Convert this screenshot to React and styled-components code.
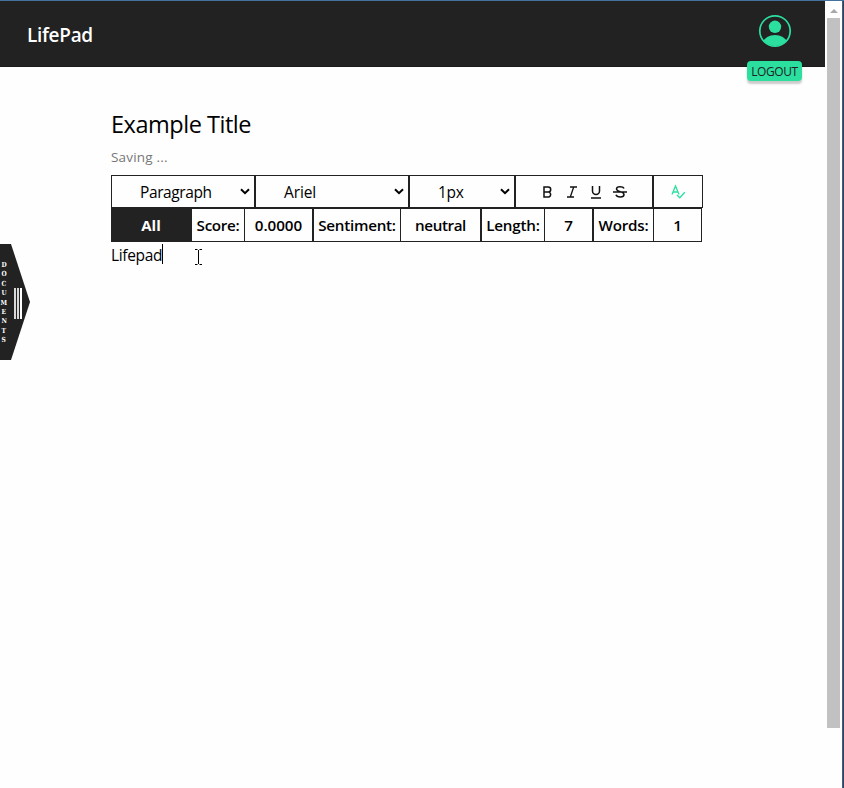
import React from "react";
import styled, { createGlobalStyle } from "styled-components";

const Global = createGlobalStyle`
  * { box-sizing: border-box; }
  body { margin: 0; background: #fefefe; color: #000; font-family: "Open Sans", "Noto Sans", sans-serif; overflow: hidden; }
`;
const Window = styled.div`
  display: grid; grid-template-columns: 825px 17px 2px; width: 844px; height: 788px;
  position: relative;
`;
const TopEdge = styled.div`
  position: absolute; top: 0; left: 0; right: 0; height: 1px; background: #41719c;
`;
const RightEdge = styled.div`background: #2b6595; border-right: 1px solid #4a3a40;`;
const Page = styled.div`position: relative;`;
const Header = styled.header`
  height: 67px; background: #222; border-bottom: 1px solid #1c1a1b;
  display: flex; justify-content: space-between; padding: 0 23px 0 27px;
`;
const Text = styled.span`
  font-size: ${(p) => p.$size || 15.5}px;
  font-weight: ${(p) => p.$weight || 400};
  letter-spacing: ${(p) => p.$track || 0}px;
  color: ${(p) => p.$color || "#000"};
  line-height: ${(p) => p.$line || 20}px;
  white-space: nowrap;
`;
const Brand = styled.div`padding-top: 24px; line-height: 0;`;
const Account = styled.div`
  display: flex; flex-direction: column; align-items: center; padding-top: 14px; width: 55px; height: 83px; z-index: 1;
  svg { display: block; flex: none; }
`;
const Logout = styled.button`
  border: 0; margin-top: 13px; padding: 1px 0 0; height: 20px; width: 55px; flex: none; border-radius: 4px;
  background: #2bdf9f; box-shadow: 0 3px 2px rgba(0,0,0,.2); display: flex; align-items: center; justify-content: center;
  font-family: inherit;
`;
const Editor = styled.main`padding: 44px 0 0 111px; display: flex; flex-direction: column; align-items: flex-start;`;
const Title = styled.h1`margin: 0; height: 26px; line-height: 0;`;
const Status = styled.div`margin-top: 10px; height: 28px; line-height: 0;`;
const Bar = styled.div`display: flex; height: ${(p) => p.$h}px;`;
const Cell = styled.div`
  width: ${(p) => p.$w}px; border: 1px solid #222; display: flex; align-items: center;
  padding: 0 3px 0 28px; justify-content: space-between;
`;
const Tools = styled(Cell)`padding: 0 24px;`;
const Check = styled(Cell)`padding: 0; justify-content: center;`;
const All = styled.div`width: 80px; background: #222; display: flex; align-items: center; justify-content: center;`;
const Stat = styled.div`
  display: grid; grid-template-columns: ${(p) => p.$a}px ${(p) => p.$b}px;
  border: 1px solid #222;
`;
const StatPart = styled.div`
  display: flex; align-items: center; justify-content: center;
  & + & { border-left: 1px solid #222; }
`;
const Content = styled.div`display: flex; height: 25px; align-items: center;`;
const Caret = styled.i`width: 1px; height: 20px; margin-bottom: 2px; background: #000;`;
const Pointer = styled.svg`position: absolute; left: 194px; top: 249px;`;
const Drawer = styled.div`
  position: absolute; left: 0; top: 244px; width: 30px; height: 116px; background: #222;
  clip-path: polygon(0 0, 11px 0, 100% 50%, 11px 100%, 0 100%);
`;
const Letters = styled.div`
  position: absolute; left: 0; top: 16px; width: 8px; display: flex; flex-direction: column; align-items: center;
  font: 700 7px/9.4px "DejaVu Serif", serif; color: #fff;
  span { transform: scaleX(.85); }
`;
const Grip = styled.div`
  position: absolute; left: 14px; top: 44px; display: flex; gap: 1px;
  i { width: 2px; height: 31px; background: #d8d8d8; }
  i:last-child { background: #fff; }
`;
const Scroll = styled.div`padding: 9px 2px 0; display: flex; flex-direction: column; align-items: center;`;
const Up = styled.div`border: 4px solid transparent; border-top: 0; border-bottom: 4px solid #a8a8a8;`;
const Thumb = styled.div`margin-top: 5px; width: 13px; height: 710px; background: #c1c1c1;`;

const Chevron = () => (
  <svg width="12" height="12" viewBox="0 0 12 12" fill="none" stroke="#000" strokeWidth="2"><path d="M2 3.2 6 7.2 10 3.2" /></svg>
);
const Icon = ({ children }) => (
  <svg width="16" height="16" viewBox="0 0 16 16" fill="none" stroke="#111" strokeWidth="1.5">{children}</svg>
);
const selects = [["Paragraph", 144, -0.4], ["Ariel", 154, -0.1], ["1px", 106, -0.3]];
const stats = [
  ["Score:", "0.0000", 52, 68, -0.3, -0.05],
  ["Sentiment:", "neutral", 86, 80, -0.25, -0.4],
  ["Length:", "7", 62, 48, -0.2, 0],
  ["Words:", "1", 59, 48, -0.2, 0],
];

export default function App() {
  return (
    <>
      <Global />
      <Window>
        <Page>
          <Header>
            <Brand><Text $size={19} $weight={600} $color="#fff" $track={-0.3} $line={22}>LifePad</Text></Brand>
            <Account>
              <svg width="34" height="34" viewBox="0 0 34 34">
                <clipPath id="face"><circle cx="17" cy="17" r="15" /></clipPath>
                <circle cx="17" cy="17" r="15.2" fill="none" stroke="#2bdf9f" strokeWidth="1.7" />
                <circle cx="17" cy="12.8" r="6.2" fill="#2bdf9f" />
                <path clipPath="url(#face)" d="M4 29Q8 21 17 21T30 29L26 34H8Z" fill="#2bdf9f" />
              </svg>
              <Logout><Text $size={12} $color="#222" $track={-0.4}>LOGOUT</Text></Logout>
            </Account>
          </Header>
          <Editor>
            <Title><Text $size={23.5} $line={26} $track={-0.47}>Example Title</Text></Title>
            <Status><Text $size={13.5} $color="#777" $track={0.2}>Saving ...</Text></Status>
            <Bar $h={33}>
              {selects.map(([label, w, t]) => (
                <Cell key={label} $w={w}><Text $track={t}>{label}</Text><Chevron /></Cell>
              ))}
              <Tools $w={138}>
                <Icon><path d="M4 8h5a2.7 2.7 0 0 1 0 5H4V3h4.2a2.4 2.4 0 0 1 0 5" /></Icon>
                <Icon><path strokeWidth="1.3" d="M6 3h7M3 13h7M9.7 3 6.3 13" /></Icon>
                <Icon><path d="M4.5 2v5a3.5 3.5 0 0 0 7 0V2M3 14h10" /></Icon>
                <Icon><path d="M12 4.5C11 2.4 4.5 2 4.5 5c0 3 7.5 2.3 7.5 5.5 0 3.3-7 3.3-8 .3M1 8h14" /></Icon>
              </Tools>
              <Check $w={50}>
                <svg width="16" height="16" viewBox="0 0 16 16" fill="none" stroke="#2bdf9f" strokeWidth="1.3"><path d="M2 10.5 5.5 2 9 10.5M3.2 8h4.6M7 11l2.8 2.8 5-5.5" /></svg>
              </Check>
            </Bar>
            <Bar $h={34}>
              <All><Text $size={15} $weight={700} $color="#fff">All</Text></All>
              {stats.map(([a, b, wa, wb, ta, tb]) => (
                <Stat key={a} $a={wa} $b={wb}>
                  <StatPart><Text $size={15.2} $weight={600} $track={ta}>{a}</Text></StatPart>
                  <StatPart><Text $size={15.2} $weight={600} $track={tb}>{b}</Text></StatPart>
                </Stat>
              ))}
            </Bar>
            <Content><Text $track={-0.35}>Lifepad</Text><Caret /></Content>
          </Editor>
          <Drawer>
            <Letters>{"DOCUMENTS".split("").map((c) => <span key={c}>{c}</span>)}</Letters>
            <Grip><i /><i /><i /></Grip>
          </Drawer>
          <Pointer width="9" height="17" viewBox="0 0 9 17" fill="none" stroke="#000"><path d="M1 .5h2.5M5.5 .5H8M4.5 1v14M1 15.5h2.5M5.5 15.5H8" /></Pointer>
        </Page>
        <Scroll><Up /><Thumb /></Scroll>
        <RightEdge />
        <TopEdge />
      </Window>
    </>
  );
}
